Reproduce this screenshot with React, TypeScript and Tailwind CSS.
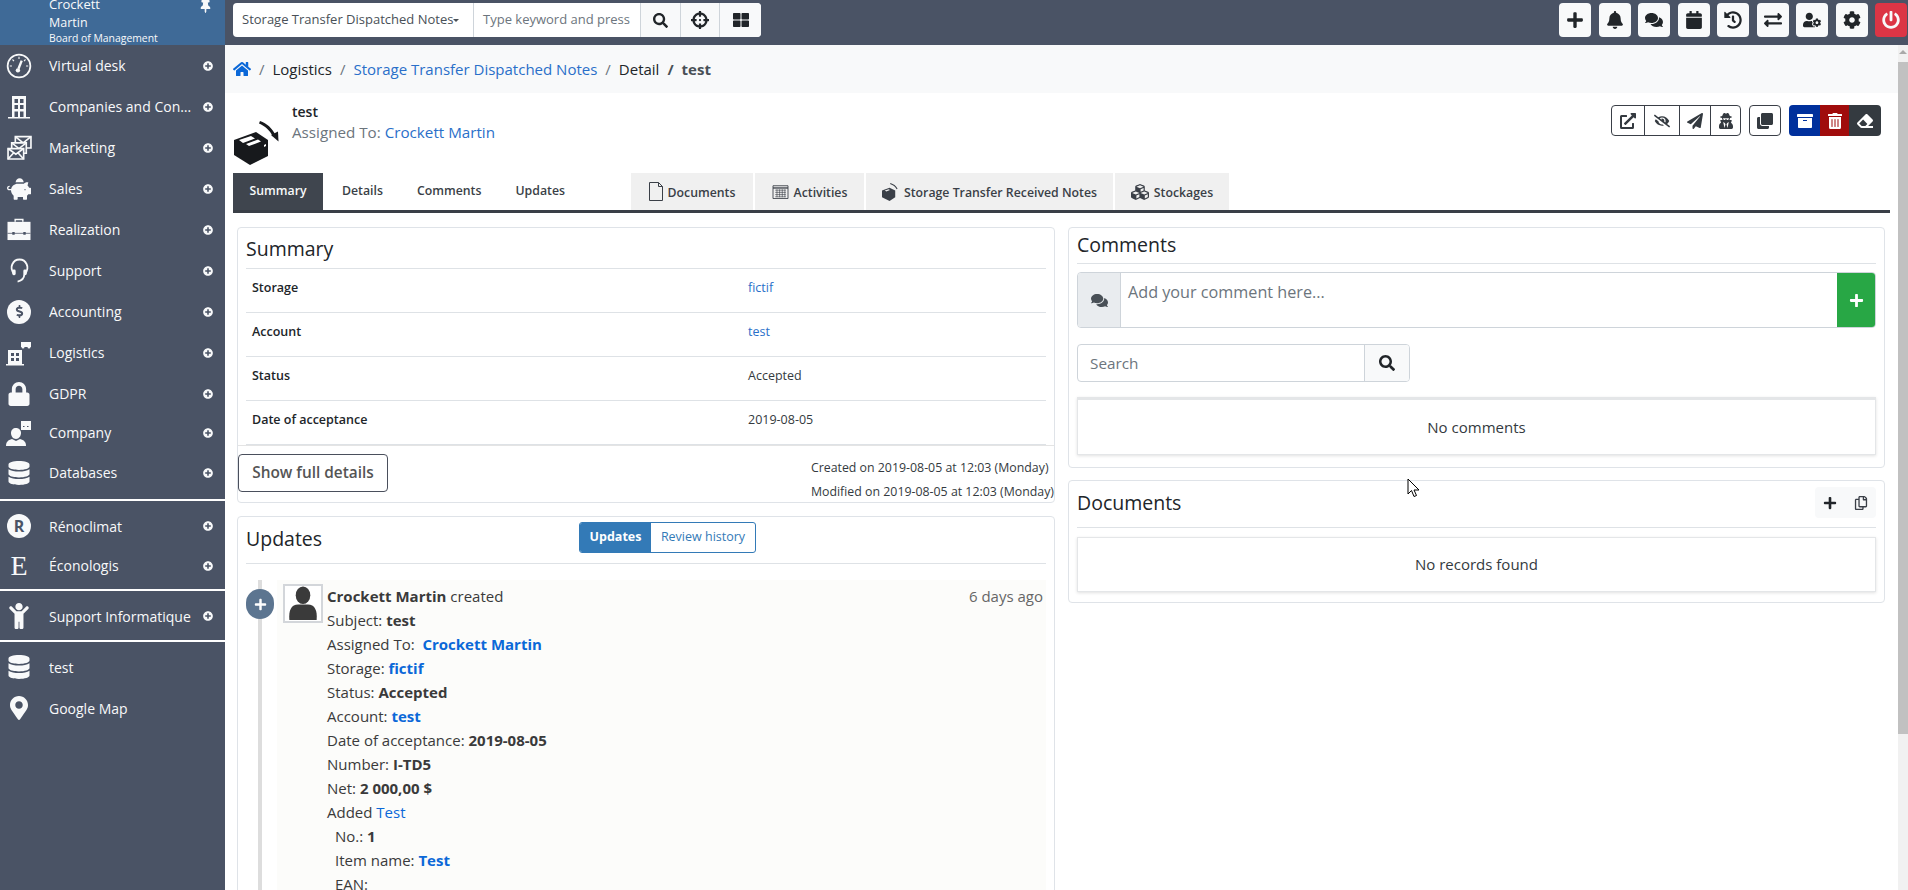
import React from "react";
import {
  FaArchive,
  FaBell,
  FaCalendar,
  FaChild,
  FaClone,
  FaCog,
  FaComments,
  FaCrosshairs,
  FaCubes,
  FaDatabase,
  FaDollarSign,
  FaEraser,
  FaExchangeAlt,
  FaExternalLinkAlt,
  FaEyeSlash,
  FaHistory,
  FaHome,
  FaLock,
  FaMapMarkerAlt,
  FaPaperPlane,
  FaPiggyBank,
  FaPlus,
  FaPlusCircle,
  FaPowerOff,
  FaRegCopy,
  FaSearch,
  FaThLarge,
  FaThumbtack,
  FaTrashAlt,
  FaUserCog,
  FaUserSecret,
} from "react-icons/fa";

const GaugeIcon = () => (
  <svg viewBox="0 0 24 24" className="h-[26px] w-[26px]" fill="none" stroke="currentColor">
    <circle cx="12" cy="12" r="10.5" strokeWidth="1.6" />
    <path d="M12 3.500v2M6 6l1.400 1.400M18 6l-1.400 1.400M3.500 12h2M20.500 12h-2" strokeWidth="1" />
    <path d="M14.500 7 L11.500 14.500" strokeWidth="2.200" />
    <circle cx="11" cy="16" r="2" fill="currentColor" stroke="none" />
  </svg>
);

const HeadsetIcon = () => (
  <svg viewBox="0 0 24 26" className="h-[25px] w-[23px]" fill="none" stroke="currentColor" strokeWidth="1.900">
    <path d="M6.500 17C3.500 13 3 9.500 4.500 6.500 6 3 9 1.500 12 1.500s6 1.500 7.500 5c1.500 3 1 6.500-2 10.500" />
    <path d="M17 17c0 4-2 6.500-7 7.500" />
    <rect x="4.500" y="12" width="3.500" height="6" rx="1.500" fill="currentColor" stroke="none" />
    <rect x="16" y="12" width="3.500" height="6" rx="1.500" fill="currentColor" stroke="none" />
  </svg>
);

const BuildingIcon = () => (
  <svg viewBox="0 0 24 24" className="h-[26px] w-[24px]" fill="currentColor">
    <path d="M5 1h14v21H5z M1 22h22v1.500H1z" />
    <path
      fill="#4a5365"
      d="M7.500 4h3.500v4H7.500zM13 4h3.500v4H13zM7.500 10h3.500v4H7.500zM13 10h3.500v4H13zM7.500 16.500h3.500V22H7.500zM13 16.500h3.500V22H13z"
    />
  </svg>
);

const EnvelopesIcon = () => (
  <svg viewBox="0 0 24 24" className="h-[25px] w-[25px]" fill="none" stroke="currentColor" strokeWidth="1.600">
    <path d="M8 1.500h15v11H8z" fill="#4a5365" />
    <path d="M8 1.500l7.500 6 7.500-6" />
    <path d="M4.500 7.500h14v10h-14z" fill="#4a5365" />
    <path d="M4.500 7.500l7 5.500 7-5.500" />
    <path d="M1 13h15v10H1z" fill="#4a5365" />
    <path d="M1 13l7.500 5.500L16 13M1 23l5.500-6M16 23l-5.500-6" />
  </svg>
);

const BriefcaseIcon = () => (
  <svg viewBox="0 0 26 24" className="h-[23px] w-[26px]" fill="currentColor">
    <path d="M1 4h24v19H1z" />
    <path d="M9 4V1.500h8V4" fill="none" stroke="currentColor" strokeWidth="1.500" />
    <path d="M1 16h24" stroke="#4a5365" strokeWidth="0.800" />
    <path d="M6 14.500h2.500v3H6zM17.500 14.500H20v3h-2.500z" fill="#4a5365" />
  </svg>
);

const LogisticsIcon = () => (
  <svg viewBox="0 0 26 26" className="h-[26px] w-[26px]" fill="currentColor">
    <path d="M2 10h14v14H2zM0 24h18v1.500H0z" />
    <path fill="#4a5365" d="M5 13h3v3H5zM10 13h3v3h-3zM5 18h3v3H5zM10 18h3v3h-3z" />
    <path d="M15 2h10v5H15z" />
    <circle cx="17" cy="7" r="1.500" />
    <circle cx="23" cy="7" r="1.500" />
  </svg>
);

const CompanyIcon = () => (
  <svg viewBox="0 0 26 26" className="h-[26px] w-[26px]" fill="currentColor">
    <path d="M10 8c3 0 5 2.200 5 5s-2 6-5 6-5-3-5-6 2-5 5-5z" />
    <path d="M0 26c0-4 2-6 6-7l4 2 4-2c4 1 6 3 6 7z" />
    <path d="M15 1h10v9H15z" />
    <path fill="#4a5365" d="M17 6h1.500v1H17zM21 6h1.500v1H21z" />
  </svg>
);

const BoxArrowIcon = () => (
  <svg viewBox="0 0 50 48" className="h-[48px] w-[50px]" fill="#17191c">
    <path d="M1 22L23 14l12 8v16L17 47 1 37z" />
    <path fill="#fff" d="M6 22l12-4 4 2.500-12 4.500zM13 26l12-4.500 3 2-12 4.500zM31 27l2-1v2l-2 1z" />
    <path d="M27 3c7 2.500 12 7 15.500 14l-2.500 1.500C36.500 12 32 8 26 5.500z" />
    <path d="M38 17l7-3.500 0.500 10z" />
  </svg>
);

const TinyBoxIcon = () => (
  <svg viewBox="0 0 18 20" className="h-[19px] w-[17px]" fill="#3a3f47">
    <path d="M0 9l8-3 6 3v7l-6 4-8-4z" />
    <path fill="#f0f0f0" d="M3 9l4-1.500 1.500 1L4.500 10z" />
    <path d="M9 1c3 1 6 3 7.500 6l-1 .5C14 5 12 3 8.500 2z" />
  </svg>
);

const CalendarGridIcon = () => (
  <svg viewBox="0 0 18 17" className="h-[15px] w-[17px]" fill="none" stroke="#3a3f47" strokeWidth="1">
    <path d="M.5 2h17v14.500H.5z" />
    <path d="M.5 4.500h17" strokeWidth="1.500" />
    <path d="M3 7h12M3 9.500h12M3 12h12M3 14.500h12M5 6v9M8 6v9M11 6v9M14 6v9" strokeWidth="0.700" />
  </svg>
);

const PageIcon = () => (
  <svg viewBox="0 0 14 19" className="h-[19px] w-[14px]" fill="none" stroke="#3a3f47" strokeWidth="1">
    <path d="M.5.500h9l4 4v14H.5z" />
    <path d="M9.500.500v4h4" />
  </svg>
);

const AvatarIcon = () => (
  <svg viewBox="0 0 36 36" className="h-[35px] w-[36px]" fill="#3a3a3a">
    <ellipse cx="18" cy="9.500" rx="7.500" ry="9" />
    <path d="M4 35c-1-10 2-16 9-16h10c7 0 10 6 9 16z" />
  </svg>
);

const SideItem = ({
  icon,
  label,
  height,
  plus = true,
}: {
  icon: React.ReactNode;
  label: string;
  height: string;
  plus?: boolean;
}) => (
  <div className={`flex shrink-0 items-center text-[14px] text-[#f8f9fa] ${height}`}>
    <div className="flex w-[49px] shrink-0 items-center justify-center pr-[11px]">{icon}</div>
    <span className="w-[146px] truncate">{label}</span>
    {plus && <FaPlusCircle className="ml-[8px] text-[10px]" />}
  </div>
);

const Sidebar = () => (
  <aside className="flex h-full w-[225px] shrink-0 flex-col bg-[#4a5365]">
    <div className="relative h-[45px] shrink-0 overflow-hidden bg-[#3f6a97] pl-[49px] text-[#f8f9fa]">
      <div className="mt-[-5px] text-[13px] leading-[19px]">Crockett</div>
      <div className="text-[12.5px] leading-[17px]">Martin</div>
      <div className="mt-[-1px] text-[10.4px] leading-[16px]">Board of Management</div>
      <FaThumbtack className="absolute right-[13px] top-0 text-[13px]" />
    </div>
    <SideItem height="h-[41px]" icon={<GaugeIcon />} label="Virtual desk" />
    <SideItem height="h-[41px]" icon={<BuildingIcon />} label="Companies and Contacts" />
    <SideItem height="h-[41px]" icon={<EnvelopesIcon />} label="Marketing" />
    <SideItem height="h-[41px]" icon={<FaPiggyBank className="text-[24px]" />} label="Sales" />
    <SideItem height="h-[41px]" icon={<BriefcaseIcon />} label="Realization" />
    <SideItem height="h-[41px]" icon={<HeadsetIcon />} label="Support" />
    <SideItem
      height="h-[41px]"
      icon={
        <span className="flex h-[24px] w-[24px] items-center justify-center rounded-full bg-[#f8f9fa]">
          <FaDollarSign className="text-[13px] text-[#4a5365]" />
        </span>
      }
      label="Accounting"
    />
    <SideItem height="h-[41px]" icon={<LogisticsIcon />} label="Logistics" />
    <SideItem height="h-[41px]" icon={<FaLock className="text-[24px]" />} label="GDPR" />
    <SideItem height="h-[37px]" icon={<CompanyIcon />} label="Company" />
    <SideItem height="h-[43px]" icon={<FaDatabase className="text-[24px]" />} label="Databases" />
    <div className="mb-[5px] mt-[5px] h-[2px] shrink-0 bg-white" />
    <SideItem
      height="h-[40px]"
      icon={
        <span className="flex h-[24px] w-[24px] items-center justify-center rounded-full bg-[#f8f9fa] text-[16px] font-bold leading-none text-[#4a5365]">
          R
        </span>
      }
      label="Rénoclimat"
    />
    <SideItem
      height="h-[39px]"
      icon={<span className="font-['Liberation_Serif',serif] text-[28px] leading-none">E</span>}
      label="Éconologis"
    />
    <div className="mb-[4px] mt-[4px] h-[2px] shrink-0 bg-white" />
    <SideItem height="h-[42px]" icon={<FaChild className="text-[26px]" />} label="Support Informatique" />
    <div className="mb-[5px] mt-[3px] h-[2px] shrink-0 bg-white" />
    <SideItem height="h-[40px]" icon={<FaDatabase className="text-[24px]" />} label="test" plus={false} />
    <SideItem height="h-[42px]" icon={<FaMapMarkerAlt className="text-[24px]" />} label="Google Map" plus={false} />
  </aside>
);

const TopButton = ({ icon, danger }: { icon: React.ReactNode; danger?: boolean }) => (
  <div
    className={`flex h-[34px] w-[32px] items-center justify-center rounded-[4px] text-[18px] ${
      danger ? "bg-[#dc3545] text-[#f8f9fa]" : "bg-[#f8f9fa] text-[#212529]"
    }`}
  >
    {icon}
  </div>
);

const TopBar = () => (
  <header className="flex h-[45px] shrink-0 items-start justify-between bg-[#4a5365] pt-[3px] pl-[8px]">
    <div className="flex h-[34px] w-[528px] items-stretch overflow-hidden rounded-[4px] bg-white text-[13px]">
      <div className="flex w-[241px] items-center border-r border-[#ced4da] pl-[9px] text-[#495057]">
        <span className="whitespace-nowrap">Storage Transfer Dispatched Notes</span>
        <span className="mt-[1px] h-0 w-0 border-x-[3.5px] border-t-[3.5px] border-x-transparent border-t-[#495057]" />
      </div>
      <div className="flex w-[167px] items-center overflow-hidden whitespace-nowrap border-r border-[#ced4da] pl-[9px] text-[#6c757d]">
        Type keyword and press
      </div>
      <div className="flex w-[40px] items-center justify-center border-r border-[#ced4da] bg-[#f8f9fa] text-[15px] text-[#212529]">
        <FaSearch />
      </div>
      <div className="flex w-[39px] items-center justify-center border-r border-[#ced4da] bg-[#f8f9fa] text-[18px] text-[#212529]">
        <FaCrosshairs />
      </div>
      <div className="flex flex-1 items-center justify-center bg-[#f8f9fa] text-[16px] text-[#212529]">
        <FaThLarge />
      </div>
    </div>
    <div className="flex gap-[7.5px] pr-[1px]">
      <TopButton icon={<FaPlus />} />
      <TopButton icon={<FaBell />} />
      <TopButton icon={<FaComments />} />
      <TopButton icon={<FaCalendar />} />
      <TopButton icon={<FaHistory />} />
      <TopButton icon={<FaExchangeAlt />} />
      <TopButton icon={<FaUserCog />} />
      <TopButton icon={<FaCog />} />
      <TopButton danger icon={<FaPowerOff />} />
    </div>
  </header>
);

const Breadcrumb = () => (
  <div className="flex h-[48px] shrink-0 items-center bg-[#f8f9fa] pl-[8px] text-[15px] text-[#212529]">
    <FaHome className="w-[18px] text-[18px] text-[#0b68d8]" />
    <span className="px-[8px] text-[#6c757d]">/</span>
    <span>Logistics</span>
    <span className="px-[8px] text-[#6c757d]">/</span>
    <span className="text-[#2a6fc9]">Storage Transfer Dispatched Notes</span>
    <span className="px-[8px] text-[#6c757d]">/</span>
    <span>Detail</span>
    <span className="px-[8px] font-bold text-[#495057]">/</span>
    <span className="font-bold text-[#495057]">test</span>
  </div>
);

const OutlineCell = ({ children, width }: { children: React.ReactNode; width: string }) => (
  <div className={`flex items-center justify-center border-r border-[#3a3f47] last:border-r-0 ${width}`}>{children}</div>
);

const TitleRow = () => (
  <div className="flex h-[80px] shrink-0 pl-[8px] pr-[17px]">
    <div className="mt-[25px]">
      <BoxArrowIcon />
    </div>
    <div className="ml-[9px] pt-[8px]">
      <div className="text-[14px] font-semibold leading-[21px] text-[#212529]">test</div>
      <div className="text-[15.2px] leading-[20px] text-[#6c757d]">
        Assigned To: <span className="text-[#2a6fc9]">Crockett Martin</span>
      </div>
    </div>
    <div className="ml-auto mt-[12px] flex h-[31px] items-stretch text-[16px] text-[#343a40]">
      <div className="flex rounded-[4px] border border-[#3a3f47]">
        <OutlineCell width="w-[33px]">
          <FaExternalLinkAlt />
        </OutlineCell>
        <OutlineCell width="w-[35px]">
          <FaEyeSlash />
        </OutlineCell>
        <OutlineCell width="w-[31px]">
          <FaPaperPlane />
        </OutlineCell>
        <OutlineCell width="w-[29px]">
          <FaUserSecret />
        </OutlineCell>
      </div>
      <div className="ml-[8px] flex w-[32px] items-center justify-center rounded-[4px] border border-[#3a3f47]">
        <FaClone />
      </div>
      <div className="ml-[8px] flex overflow-hidden rounded-[4px] text-white">
        <div className="flex w-[31px] items-center justify-center bg-[#00309c]">
          <FaArchive />
        </div>
        <div className="flex w-[29px] items-center justify-center bg-[#a00c0c]">
          <FaTrashAlt />
        </div>
        <div className="flex w-[32px] items-center justify-center bg-[#343a40]">
          <FaEraser />
        </div>
      </div>
    </div>
  </div>
);

const RightTab = ({ icon, label, width }: { icon: React.ReactNode; label: string; width: string }) => (
  <div className={`flex items-center justify-center gap-[5px] bg-[#f0f0f0] text-[12.3px] font-semibold text-[#3a3f47] ${width}`}>
    {icon}
    <span className="mt-[3px] whitespace-nowrap">{label}</span>
  </div>
);

const Tabs = () => (
  <div className="mx-[8px] flex h-[40px] shrink-0 border-b-[3px] border-[#3a3f47] text-[12.3px] font-semibold text-[#3a3f47]">
    <div className="flex w-[90px] items-center justify-center bg-[#3f454e] text-[#f8f9fa]">Summary</div>
    <div className="ml-[19px] flex items-center">Details</div>
    <div className="ml-[34px] flex items-center">Comments</div>
    <div className="ml-[34px] flex items-center">Updates</div>
    <div className="ml-[66px] flex gap-[2px]">
      <RightTab icon={<PageIcon />} label="Documents" width="w-[122px]" />
      <RightTab icon={<CalendarGridIcon />} label="Activities" width="w-[109px]" />
      <RightTab icon={<TinyBoxIcon />} label="Storage Transfer Received Notes" width="w-[247px]" />
      <RightTab icon={<FaCubes className="text-[18px] text-[#3a3f47]" />} label="Stockages" width="w-[114px]" />
    </div>
  </div>
);

const Card = ({ className, children }: { className: string; children: React.ReactNode }) => (
  <section className={`rounded-[4px] border border-[#dfe3e8] bg-white ${className}`}>{children}</section>
);

const SummaryRow = ({ label, value, link }: { label: string; value: string; link?: boolean }) => (
  <div className="flex h-[44px] items-start border-b border-[#dee2e6] pl-[6px] pt-[9px] text-[12.5px] leading-[20px]">
    <span className="w-[496px] font-semibold text-[#212529]">{label}</span>
    <span className={link ? "text-[#2a6fc9]" : "text-[#343a40]"}>{value}</span>
  </div>
);

const SummaryCard = () => (
  <Card className="h-[276px]">
    <div className="mx-[8px] flex h-[41px] items-center border-b border-[#dee2e6] pt-[2px] text-[19.5px] font-normal text-[#212529]">
      Summary
    </div>
    <div className="mx-[8px]">
      <SummaryRow label="Storage" value="fictif" link />
      <SummaryRow label="Account" value="test" link />
      <SummaryRow label="Status" value="Accepted" />
      <SummaryRow label="Date of acceptance" value="2019-08-05" />
    </div>
    <div className="flex justify-between border-t border-[#e4e4e4]">
      <div className="mt-[8px] flex h-[38px] w-[150px] items-center justify-center rounded-[4px] border border-[#4a4f5c] text-[15.4px] font-semibold text-[#555]">
        Show full details
      </div>
      <div className="mt-[10px] text-[12.35px] leading-[24px] text-[#343a40]">
        <div>Created on 2019-08-05 at 12:03 (Monday)</div>
        <div>Modified on 2019-08-05 at 12:03 (Monday)</div>
      </div>
    </div>
  </Card>
);

const Line = ({ children }: { children: React.ReactNode }) => <div className="h-[24px]">{children}</div>;
const B = ({ children }: { children: React.ReactNode }) => <b className="font-bold text-[#3a3a3a]">{children}</b>;
const L = ({ children }: { children: React.ReactNode }) => <b className="font-bold text-[#0b68d8]">{children}</b>;

const UpdatesCard = () => (
  <Card className="mt-[13px] h-[600px] overflow-hidden">
    <div className="relative mx-[8px] flex h-[47px] items-center border-b border-[#dee2e6] pb-[3px] text-[19.5px] text-[#212529]">
      Updates
      <div className="absolute left-[333px] top-[5px] flex h-[31px] w-[177px] overflow-hidden rounded-[3px] border border-[#337ab7] text-[12.5px] leading-none">
        <div className="flex w-[71px] items-center justify-center bg-[#337ab7] font-bold text-white">Updates</div>
        <div className="flex flex-1 items-center justify-center text-[#337ab7]">Review history</div>
      </div>
    </div>
    <div className="relative ml-[8px] mr-[8px] mt-[16px]">
      <div className="absolute bottom-0 left-[12px] top-0 w-[4px] bg-[#dddddd]" />
      <div className="absolute left-0 top-[9px] flex h-[30px] w-[28px] items-center justify-center rounded-full bg-[#5c7590] text-[13px] text-white">
        <FaPlus />
      </div>
      <div className="ml-[31px] flex min-h-[400px] bg-[#fcfcfa] pl-[6px] pt-[4px] text-[15px] text-[#3a3a3a]">
        <div className="flex h-[39px] w-[40px] shrink-0 items-end justify-center border-2 border-[#d3d6da] bg-white">
          <AvatarIcon />
        </div>
        <div className="ml-[4px] flex-1 leading-[24px]">
          <div className="flex h-[24px] justify-between pr-[3px]">
            <div>
              <B>Crockett Martin</B> created
            </div>
            <span className="text-[#666]">6 days ago</span>
          </div>
          <Line>
            Subject: <B>test</B>
          </Line>
          <Line>
            Assigned To:&nbsp; <L>Crockett Martin</L>
          </Line>
          <Line>
            Storage: <L>fictif</L>
          </Line>
          <Line>
            Status: <B>Accepted</B>
          </Line>
          <Line>
            Account: <L>test</L>
          </Line>
          <Line>
            Date of acceptance: <B>2019-08-05</B>
          </Line>
          <Line>
            Number: <B>I-TD5</B>
          </Line>
          <Line>
            Net: <B>2 000,00 $</B>
          </Line>
          <Line>
            Added <span className="text-[#0b68d8]">Test</span>
          </Line>
          <div className="pl-[8px]">
            <Line>
              No.: <B>1</B>
            </Line>
            <Line>
              Item name: <L>Test</L>
            </Line>
            <Line>EAN:</Line>
          </div>
        </div>
      </div>
    </div>
  </Card>
);

const CommentsCard = () => (
  <Card className="h-[241px] px-[8px]">
    <div className="flex h-[36px] items-center border-b border-[#dee2e6] pb-[1px] text-[19.5px] text-[#212529]">Comments</div>
    <div className="mt-[8px] flex h-[56px] overflow-hidden rounded-[4px] border border-[#ced4da]">
      <div className="flex w-[43px] items-center justify-center border-r border-[#ced4da] bg-[#e9ecef] text-[17px] text-[#495057]">
        <FaComments />
      </div>
      <div className="flex-1 pl-[7px] pt-[8px] text-[16.2px] leading-[22px] text-[#6c757d]">Add your comment here...</div>
      <div className="flex w-[38px] items-center justify-center bg-[#28a745] text-[15px] text-white">
        <FaPlus />
      </div>
    </div>
    <div className="mt-[16px] flex h-[38px] w-[333px] overflow-hidden rounded-[4px] border border-[#ced4da]">
      <div className="flex flex-1 items-center border-r border-[#ced4da] pl-[12px] pt-[1px] text-[15.3px] text-[#6c757d]">Search</div>
      <div className="flex w-[44px] items-center justify-center bg-[#f8f9fa] text-[16px] text-[#212529]">
        <FaSearch />
      </div>
    </div>
    <div className="mt-[15px] flex h-[58px] items-center justify-center border-t-[3px] border-x border-b border-[#e4e6e8] pt-[1px] text-[15px] text-[#343a40] shadow-[0_1px_3px_rgba(0,0,0,0.12)]">
      No comments
    </div>
  </Card>
);

const DocumentsCard = () => (
  <Card className="relative mt-[12px] h-[123px] px-[8px]">
    <div className="flex h-[47px] items-center justify-between border-b border-[#dee2e6] text-[19.5px] text-[#212529]">
      <span className="mb-[3px]">Documents</span>
      <div className="mb-[3px] flex h-[31px] w-[61px] items-center justify-around rounded-[4px] bg-[#f8f9fa] text-[14px] text-[#212529]">
        <FaPlus />
        <FaRegCopy className="text-[#3a3f47]" />
      </div>
    </div>
    <div className="mt-[9px] flex h-[55px] items-center justify-center border border-[#e4e6e8] text-[15px] text-[#343a40] shadow-[0_1px_3px_rgba(0,0,0,0.12)]">
      No records found
    </div>
    <svg viewBox="0 0 12 19" className="absolute left-[338px] top-[-3px] h-[19px] w-[12px]" fill="#fff" stroke="#000" strokeWidth="1">
      <path d="M1 1v15l3.500-3.500 2.500 6 2.500-1-2.500-5.500h5z" />
    </svg>
  </Card>
);

const Scrollbar = () => (
  <div className="flex w-[10px] shrink-0 flex-col bg-[#f1f1f1]">
    <div className="flex h-[17px] items-start justify-center pt-[5px]">
      <span className="h-0 w-0 border-x-[4px] border-b-[4px] border-x-transparent border-b-[#a9a9a9]" />
    </div>
    <div className="h-[672px] bg-[#c1c1c1]" />
  </div>
);

export default function App() {
  return (
    <div className="flex h-[890px] w-[1908px] overflow-hidden bg-white font-['Open_Sans','Noto_Sans',sans-serif]">
      <Sidebar />
      <div className="flex min-w-0 flex-1 flex-col">
        <TopBar />
        <div className="flex min-h-0 flex-1">
          <main className="flex min-w-0 flex-1 flex-col overflow-hidden">
            <Breadcrumb />
            <TitleRow />
            <Tabs />
            <div className="grid grid-cols-[818px_817px] gap-[13px] pl-[12px] pt-[14px]">
              <div>
                <SummaryCard />
                <UpdatesCard />
              </div>
              <div>
                <CommentsCard />
                <DocumentsCard />
              </div>
            </div>
          </main>
          <Scrollbar />
        </div>
      </div>
    </div>
  );
}
